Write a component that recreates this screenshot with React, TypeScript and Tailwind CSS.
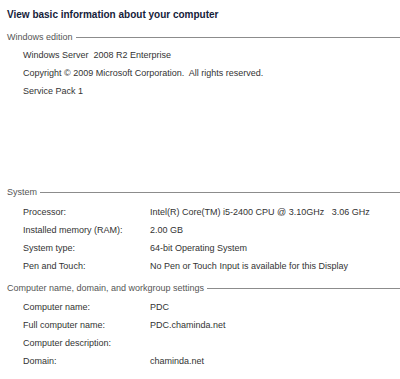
const sections = [
  {
    title: 'Windows edition',
    gapTop: 'mt-[4px]',
    rowsTop: 'mt-0',
    plain: [
      'Windows Server  2008 R2 Enterprise',
      'Copyright \u00a9 2009 Microsoft Corporation.  All rights reserved.',
      'Service Pack 1',
    ],
  },
];

const system = [
  ['Processor:', 'Intel(R) Core(TM) i5-2400 CPU @ 3.10GHz   3.06 GHz'],
  ['Installed memory (RAM):', '2.00 GB'],
  ['System type:', '64-bit Operating System'],
  ['Pen and Touch:', 'No Pen or Touch Input is available for this Display'],
];

const computer = [
  ['Computer name:', 'PDC'],
  ['Full computer name:', 'PDC.chaminda.net'],
  ['Computer description:', ''],
  ['Domain:', 'chaminda.net'],
];

const SectionHeader = ({ label, className = '' }: { label: string; className?: string }) => (
  <div className={`flex items-center gap-[3px] h-[18px] text-[#555] ${className}`}>
    <span className="whitespace-nowrap leading-[18px]">{label}</span>
    <div className="flex-1 h-px bg-[#8c8c8c] mt-[1px]" />
  </div>
);

const InfoRows = ({ rows, className = '' }: { rows: string[][]; className?: string }) => (
  <div className={`grid grid-cols-[127px_1fr] pl-[16px] text-[#333] ${className}`}>
    {rows.map(([label, value]) => (
      <div key={label} className="contents">
        <div className="h-[18px] leading-[18px] whitespace-nowrap">{label}</div>
        <div className="h-[18px] leading-[18px] whitespace-pre">{value}</div>
      </div>
    ))}
  </div>
);

export default function App() {
  return (
    <div
      className="w-[400px] h-[379px] bg-white pl-[7px] pt-[6px] overflow-hidden text-[9px]"
      style={{ fontFamily: '"Liberation Sans", Arial, sans-serif' }}
    >
      <h1 className="h-[18px] leading-[18px] text-[10px] font-bold text-[#15213a]">
        View basic information about your computer
      </h1>

      {sections.map((s) => (
        <div key={s.title}>
          <SectionHeader label={s.title} className={s.gapTop} />
          <div className="pl-[16px] text-[#333]">
            {s.plain.map((line) => (
              <div key={line} className="h-[18px] leading-[18px] whitespace-pre">
                {line}
              </div>
            ))}
          </div>
        </div>
      ))}

      <SectionHeader label="System" className="mt-[83px]" />
      <InfoRows rows={system} className="mt-[2px]" />

      <SectionHeader label="Computer name, domain, and workgroup settings" className="mt-[4px]" />
      <InfoRows rows={computer} className="mt-[1px]" />
    </div>
  );
}
